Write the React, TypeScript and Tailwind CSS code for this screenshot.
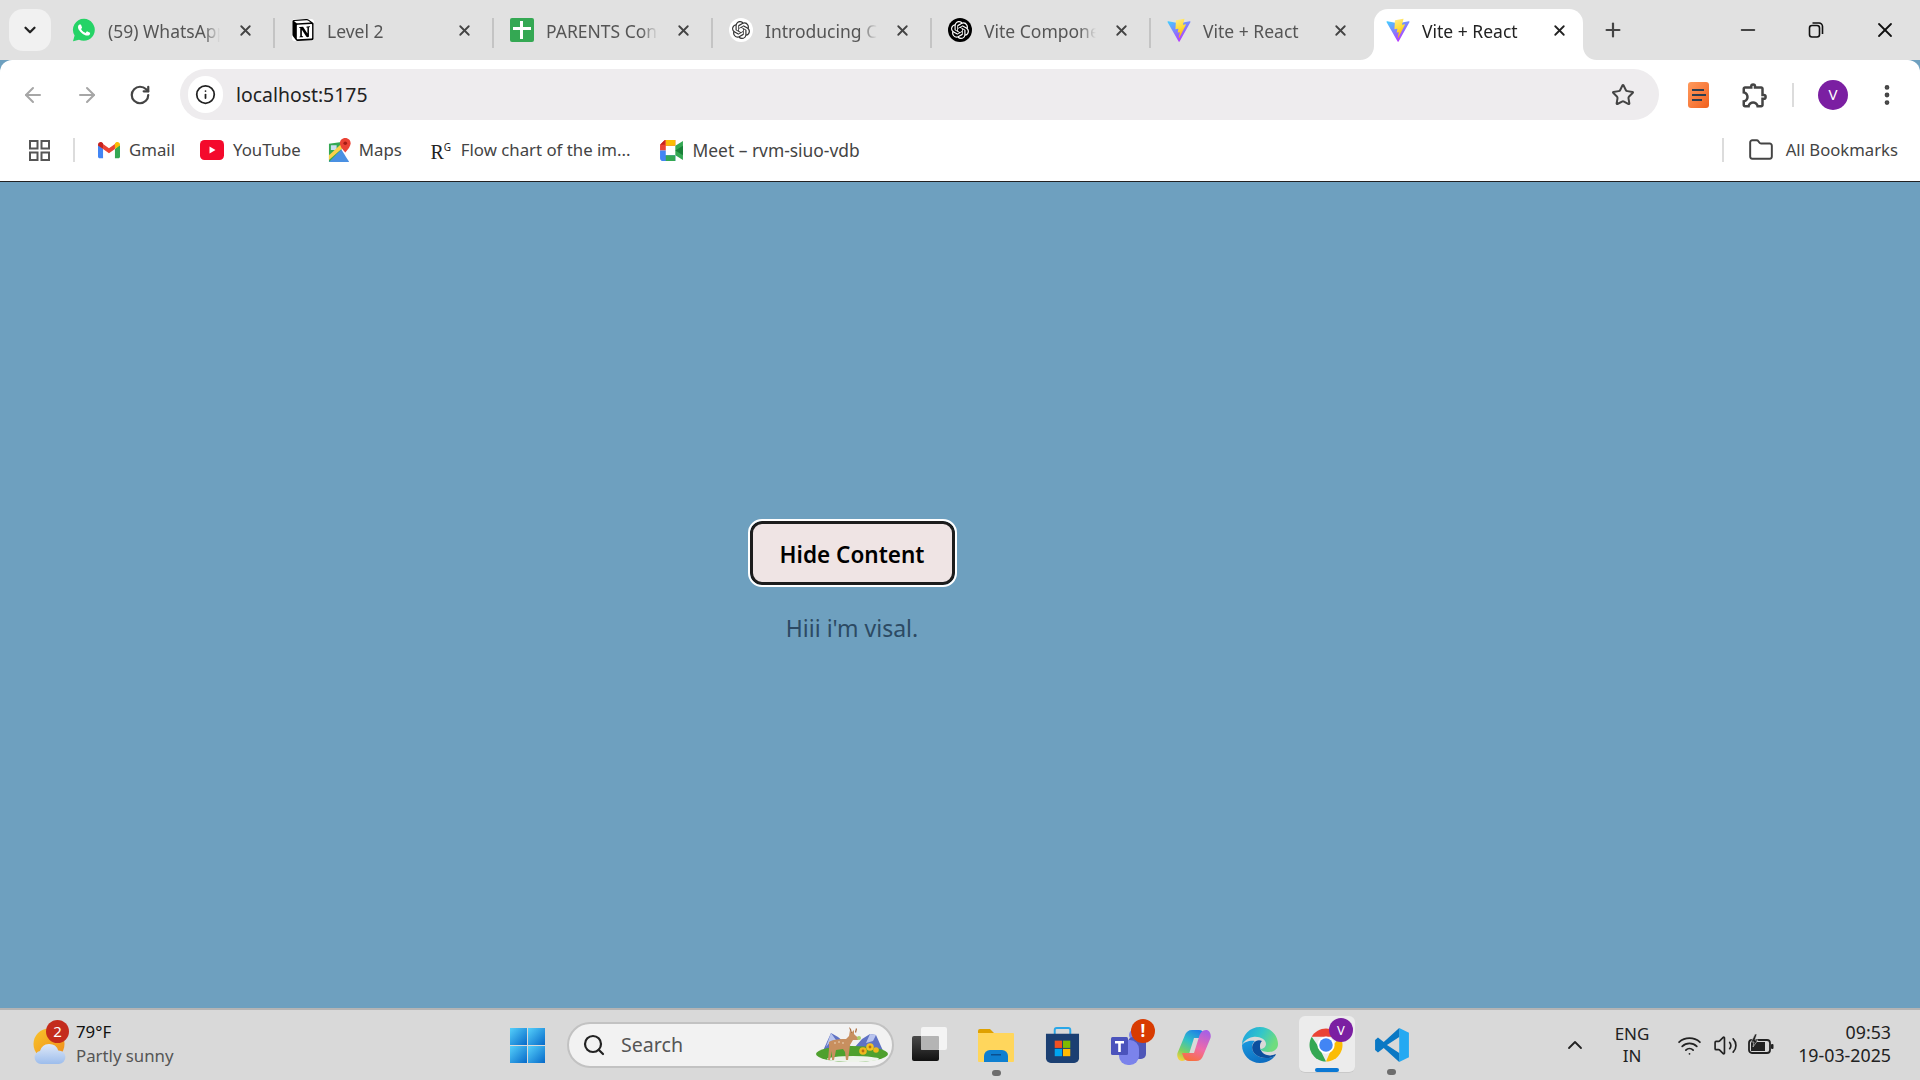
import React from "react";
import { ArrowLeft, ArrowRight, RotateCw, Info, Star, MoreVertical, Folder, Search, ChevronUp, ChevronDown, X, Plus, Minus, Wifi, Volume2 } from "lucide-react";
import { SiOpenai, SiNotion } from "react-icons/si";
import { MdOutlineExtension } from "react-icons/md";

const FONT = "font-['Noto_Sans','Open_Sans',sans-serif]";

function ViteLogo({ id }: { id: string }) {
  return (
    <svg viewBox="0 0 410 404" className="w-[25px] h-[25px]">
      <defs>
        <linearGradient id={id + "a"} x1="0" y1="0" x2="0.6" y2="1">
          <stop offset="0" stopColor="#41D1FF" />
          <stop offset="1" stopColor="#BD34FE" />
        </linearGradient>
        <linearGradient id={id + "b"} x1="0.3" y1="0" x2="0.6" y2="1">
          <stop offset="0" stopColor="#FFEA83" />
          <stop offset="0.5" stopColor="#FFDD35" />
          <stop offset="1" stopColor="#FFA800" />
        </linearGradient>
      </defs>
      <path fill={`url(#${id}a)`} d="M399.641 59.5246L215.643 388.545C211.844 395.338 202.084 395.378 198.228 388.618L10.5817 59.5563C6.38087 52.1896 12.6802 43.2665 21.0281 44.7586L205.223 77.6824C206.398 77.8924 207.601 77.8904 208.776 77.6763L389.119 44.8058C397.439 43.2894 403.768 52.1434 399.641 59.5246Z" />
      <path fill={`url(#${id}b)`} d="M292.965 1.5744L156.801 28.2552C154.563 28.6937 152.906 30.5903 152.771 32.8664L144.395 174.33C144.198 177.662 147.258 180.248 150.51 179.498L188.42 170.749C191.967 169.931 195.172 173.055 194.443 176.622L183.18 231.775C182.422 235.487 185.907 238.661 189.532 237.56L212.947 230.446C216.577 229.344 220.065 232.527 219.297 236.242L201.398 322.875C200.278 328.294 207.486 331.249 210.492 326.603L212.5 323.5L323.454 102.072C325.312 98.3645 322.108 94.137 318.036 94.9228L279.014 102.454C275.347 103.161 272.227 99.746 273.262 96.1583L298.731 7.86689C299.767 4.27314 296.636 0.855181 292.965 1.5744Z" />
    </svg>
  );
}

function WhatsappIcon() {
  return (
    <svg viewBox="0 0 24 24" className="w-[24px] h-[24px]">
      <path d="M12.100 .8A11 11 0 0 0 2.600 17.500L1 23.300l6-1.600A11 11 0 1 0 12.100 .8z" fill="#25d366" />
      <path d="M17.472 14.382c-.297-.149-1.758-.867-2.03-.967-.273-.099-.471-.148-.67.15-.197.297-.767.966-.94 1.164-.173.199-.347.223-.644.075-.297-.15-1.255-.463-2.39-1.475-.883-.788-1.48-1.761-1.653-2.059-.173-.297-.018-.458.13-.606.134-.133.298-.347.446-.52.149-.174.198-.298.298-.497.099-.198.05-.371-.025-.52-.075-.149-.669-1.612-.916-2.207-.242-.579-.487-.5-.669-.51-.173-.008-.371-.01-.57-.01-.198 0-.52.074-.792.372-.272.297-1.04 1.016-1.04 2.479 0 1.462 1.065 2.875 1.213 3.074.149.198 2.096 3.2 5.077 4.487.709.306 1.262.489 1.694.625.712.227 1.36.195 1.871.118.571-.085 1.758-.719 2.006-1.413.248-.694.248-1.289.173-1.413-.074-.124-.272-.198-.57-.347z" fill="#fff" />
    </svg>
  );
}

function SheetsIcon() {
  return (
    <svg viewBox="0 0 24 24" className="w-[24px] h-[24px]">
      <rect x="0" y="0" width="24" height="24" rx="2" fill="#34a853" />
      <rect x="3" y="9" width="18" height="3" fill="#fff" />
      <rect x="10" y="3" width="3" height="18" fill="#fff" />
    </svg>
  );
}

function Tab({ icon, title, active, sep }: { icon: React.ReactNode; title: string; active?: boolean; sep?: boolean }) {
  return (
    <div className="relative w-[219px] h-[60px] shrink-0">
      {active && (
        <>
          <div className="absolute left-[6px] top-[9px] bottom-0 w-[209px] bg-white rounded-t-[14px]" />
          <svg viewBox="0 0 14 14" className="absolute left-[-8px] bottom-0 w-[14px] h-[14px]"><path d="M14 0V14H0C8 14 14 8 14 0Z" fill="#fff" /></svg>
          <svg viewBox="0 0 14 14" className="absolute left-[215px] bottom-0 w-[14px] h-[14px]"><path d="M0 0V14H14C6 14 0 8 0 0Z" fill="#fff" /></svg>
        </>
      )}
      <div className="relative flex items-center h-[42px] mt-[9px] pl-[18px]">
        <div className="w-[24px] h-[24px] flex items-center justify-center shrink-0">{icon}</div>
        <div className={`ml-[12px] mt-[2px] w-[112px] whitespace-nowrap overflow-hidden text-[17.5px] leading-[24px] [mask-image:linear-gradient(90deg,#000_85%,transparent)] ${active ? "text-[#222]" : "text-[#555]"}`}>{title}</div>
        <X className={`ml-[17px] shrink-0 ${active ? "text-[#222]" : "text-[#444]"}`} size={17} strokeWidth={2.6} />
      </div>
      {sep && <div className="absolute right-[-2px] top-[18px] w-[2px] h-[30px] bg-[#c4c4c4]" />}
    </div>
  );
}

function GmailIcon() {
  return (
    <svg viewBox="0 0 24 18" className="w-[22px] h-[18px]">
      <path d="M0 3v13c0 1 .8 2 2 2h3.5V8z" fill="#4285f4" />
      <path d="M24 3v13c0 1-.8 2-2 2h-3.5V8z" fill="#34a853" />
      <path d="M5.5 8 12 12.6 18.5 8V2.4L12 7.2 5.5 2.4z" fill="#ea4335" />
      <path d="M0 3c0-2.4 2.7-3.6 4.5-2.3l1 .8V8L0 4z" fill="#c5221f" />
      <path d="M24 3c0-2.4-2.7-3.6-4.5-2.3l-1 .8V8L24 4z" fill="#fbbc04" />
    </svg>
  );
}

function YoutubeIcon() {
  return (
    <svg viewBox="0 0 24 20" className="w-[24px] h-[20px]">
      <rect width="24" height="20" rx="4.5" fill="#f40a2c" />
      <path d="M9.5 6.5v7l6-3.5z" fill="#fff" />
    </svg>
  );
}

function MapsIcon() {
  return (
    <svg viewBox="0 0 24 26" className="w-[23px] h-[25px]">
      <path d="M1 6 14 4v20L1 25z" fill="#34a853" />
      <path d="M1 25 14 12l8 13z" fill="#4a90e2" />
      <path d="M3 7.500h6v5H3z" fill="#c9dff0" />
      <path d="M1 18 14 6h1.500v4L1 23z" fill="#fbd04a" />
      <path d="M14 24 8 18l4-3.500 10 10z" fill="#4a90e2" />
      <path d="M18 0c-3.3 0-5.6 2.4-5.6 5.4C12.4 9.5 18 15 18 15s5.600-5.500 5.600-9.600C23.600 2.400 21.300 0 18 0z" fill="#ea4335" />
      <circle cx="18" cy="5.400" r="1.900" fill="#a51c15" />
    </svg>
  );
}

function MeetIcon() {
  return (
    <svg viewBox="0 0 24 22" className="w-[23px] h-[21px]">
      <path d="M5 0h11v6H6v5H0V5z" fill="#ea4335" />
      <path d="M0 11h6v5h10v6H3c-1.700 0-3-1.300-3-3z" fill="#4285f4" />
      <path d="M6 0h10v6H6z" fill="#fbbc04" />
      <path d="M6 16h10v6H6z" fill="#34a853" />
      <path d="M16 6v10l8 5V1z" fill="#34a853" />
      <path d="M16 11l8-5v10z" fill="#188038" />
      <path d="M0 5h5V0z" fill="#c5221f" />
    </svg>
  );
}

function Bookmark({ icon, label, iconW, gap, mr, size }: { icon: React.ReactNode; label: string; iconW: string; gap: string; mr: string; size: string }) {
  return (
    <div className={`flex items-center shrink-0 ${mr}`}>
      <div className={`flex items-center justify-center ${iconW} ${gap}`}>{icon}</div>
      <span className={`${size} leading-[24px] text-[#444] whitespace-nowrap`}>{label}</span>
    </div>
  );
}

function Slot({ children, tile }: { children: React.ReactNode; tile?: boolean }) {
  return (
    <div className="relative w-[66px] h-[70px] flex items-center justify-center shrink-0">
      {tile && <div className="absolute left-[6px] top-[6px] w-[56px] h-[57px] rounded-[6px] bg-[#ececec] border-b border-[#c9c9c9]" />}
      <div className="relative">{children}</div>
    </div>
  );
}

function Deer() {
  return (
    <svg viewBox="0 0 72 36" className="w-[72px] h-[36px]">
      <path d="M6 26 15 6l7 4 6 5 10 6 8-9 8-5 6 1 8 18z" fill="#5f72c4" />
      <path d="M10 20 15 6l5 7-5 1zM50 16l4-9 6 1-3 6z" fill="#b9c4ee" />
      <ellipse cx="36" cy="27" rx="36" ry="8" fill="#4fa02e" />
      <ellipse cx="37" cy="32" rx="26" ry="3" fill="#eef3ea" />
      <path d="M13 15c5-3 12-3 17-3l3-3 1-6 1 3 3-3 0 4 2 2 3 2-1 2-5 0-3 5-1 8-1 7h-2l-1-8-2-3-7 1-2 10h-2l0-9-2 9h-2l1-11z" fill="#c88f5f" />
      <path d="M35 6l-2-6 2 2 1 4zM39 5l1-4 1 1-1 4z" fill="#a9683a" />
      <circle cx="19" cy="16" r=".8" fill="#f2dcc4" />
      <circle cx="23" cy="15" r=".8" fill="#f2dcc4" />
      <circle cx="27" cy="16" r=".8" fill="#f2dcc4" />
      <circle cx="43" cy="11" r="2" fill="#a8cf6a" />
      <circle cx="47" cy="24" r="3.800" fill="#efb71d" />
      <circle cx="47" cy="24" r="1.400" fill="#b86f10" />
      <circle cx="54" cy="20" r="3.800" fill="#f4c224" />
      <circle cx="54" cy="20" r="1.400" fill="#b86f10" />
      <circle cx="60" cy="23" r="2.800" fill="#efb71d" />
    </svg>
  );
}

export default function App() {
  const inactive = [
    { t: "(59) WhatsApp", i: <WhatsappIcon /> },
    { t: "Level 2", i: <div className="w-[22px] h-[22px] bg-white flex items-center justify-center rounded-[3px]"><SiNotion size={22} color="#000" /></div> },
    { t: "PARENTS Contact", i: <SheetsIcon /> },
    { t: "Introducing ChatGPT", i: <div className="w-[24px] h-[24px] rounded-full bg-white flex items-center justify-center"><SiOpenai size={18} color="#333" /></div> },
    { t: "Vite Components", i: <div className="w-[24px] h-[24px] rounded-full bg-black flex items-center justify-center"><SiOpenai size={18} color="#fff" /></div> },
    { t: "Vite + React", i: <ViteLogo id="v1" /> },
  ];
  return (
    <div className={`${FONT} w-full h-screen flex flex-col overflow-hidden bg-[#6ea0bf]`}>
      <svg className="absolute w-0 h-0">
        <defs>
          <linearGradient id="edgeg" x1="0" y1="0" x2="1" y2="0.4">
            <stop offset="0" stopColor="#1b9de2" />
            <stop offset="0.55" stopColor="#33c6c9" />
            <stop offset="1" stopColor="#6fdc7e" />
          </linearGradient>
          <linearGradient id="edgeb" x1="0" y1="0" x2="0.6" y2="1">
            <stop offset="0" stopColor="#1a9be0" />
            <stop offset="1" stopColor="#0d6cc0" />
          </linearGradient>
          <linearGradient id="wing" x1="0" y1="0" x2="1" y2="1">
            <stop offset="0" stopColor="#55d0fb" />
            <stop offset="1" stopColor="#0669c9" />
          </linearGradient>
          <linearGradient id="cop1" x1="0.7" y1="0" x2="0.2" y2="1">
            <stop offset="0" stopColor="#1f7fe6" />
            <stop offset="0.4" stopColor="#2fc0c8" />
            <stop offset="0.75" stopColor="#7fd060" />
            <stop offset="1" stopColor="#f4d23c" />
          </linearGradient>
          <linearGradient id="cop2" x1="0.7" y1="0" x2="0.3" y2="1">
            <stop offset="0" stopColor="#a860e4" />
            <stop offset="0.55" stopColor="#f06aa8" />
            <stop offset="1" stopColor="#f8703c" />
          </linearGradient>
          <linearGradient id="sun" x1="0" y1="0" x2="1" y2="1">
            <stop offset="0" stopColor="#f9c42a" />
            <stop offset="1" stopColor="#ee8a1c" />
          </linearGradient>
          <linearGradient id="cloud" x1="0" y1="0" x2="0" y2="1">
            <stop offset="0" stopColor="#dfe9f8" />
            <stop offset="1" stopColor="#9dbdec" />
          </linearGradient>
          <linearGradient id="dark" x1="0" y1="0" x2="0" y2="1">
            <stop offset="0" stopColor="#4a4a4a" />
            <stop offset="1" stopColor="#111" />
          </linearGradient>
        </defs>
      </svg>

      {/* tab strip */}
      <div className="h-[60px] shrink-0 bg-[#e1e1e1] flex items-start">
        <div className="w-[54px] shrink-0 pl-[9px] pt-[9px]">
          <div className="w-[42px] h-[42px] rounded-[14px] bg-[#f1f1f1] flex items-center justify-center">
            <ChevronDown size={18} strokeWidth={3} className="text-[#222]" />
          </div>
        </div>
        {inactive.map((t, i) => (
          <Tab key={t.t} icon={t.i} title={t.t} sep={i !== 5} />
        ))}
        <Tab icon={<ViteLogo id="v2" />} title="Vite + React" active />
        <div className="w-[22px] ml-[15px] h-[60px] flex items-center justify-center shrink-0">
          <Plus size={22} strokeWidth={2.4} className="text-[#444]" />
        </div>
        <div className="ml-auto flex items-center h-[60px] pr-[23px] gap-[49px] text-[#111]">
          <Minus size={22} strokeWidth={1.8} />
          <svg viewBox="0 0 16 16" className="w-[16px] h-[16px]" fill="none" stroke="#111" strokeWidth="1.600">
            <rect x="1.500" y="3.500" width="10" height="11.500" rx="2.500" />
            <path d="M4.500 1h6.500A3.500 3.500 0 0 1 14.500 4.500V12" />
          </svg>
          <X size={24} strokeWidth={1.8} />
        </div>
      </div>

      {/* toolbar */}
      <div className="h-[60px] shrink-0 bg-white rounded-t-[12px] flex items-start pt-[9px]">
        <div className="w-[180px] shrink-0 h-[51px] flex items-center pl-[21px] gap-[30px]">
          <ArrowLeft size={24} strokeWidth={2} className="text-[#a6a6a6]" />
          <ArrowRight size={24} strokeWidth={2} className="text-[#a6a6a6]" />
          <RotateCw size={22} strokeWidth={2.4} className="text-[#444]" />
        </div>
        <div className="w-[1479px] shrink-0 h-[51px] rounded-full bg-[#eeecee] flex items-center pl-[8px] pr-[24px]">
          <div className="w-[35px] h-[37px] rounded-full bg-white flex items-center justify-center">
            <Info size={21} strokeWidth={2} className="text-[#222]" />
          </div>
          <span className="ml-[13px] text-[19.4px] leading-[26px] text-[#222]">localhost:5175</span>
          <Star size={24} strokeWidth={2} className="ml-auto text-[#444]" />
        </div>
        <div className="flex-1 h-[51px] flex items-center pl-[29px]">
          <div className="shrink-0 w-[21px] h-[26px] rounded-[3px] bg-gradient-to-br from-[#ff9a5c] to-[#f0601a] flex flex-col justify-center gap-[3px] px-[4px]">
            <div className="h-[2px] w-[12px] bg-[#2c3e50]" />
            <div className="h-[2px] w-[14px] bg-[#2c3e50]" />
            <div className="h-[2px] w-[10px] bg-[#2c3e50]" />
          </div>
          <MdOutlineExtension size={30} className="shrink-0 ml-[31px] text-[#444]" />
          <div className="shrink-0 ml-[22px] w-[2px] h-[24px] bg-[#dcdcdc]" />
          <div className="shrink-0 ml-[24px] w-[30px] h-[30px] rounded-full bg-[#7b1fa2] flex items-center justify-center text-white text-[15px]">V</div>
          <MoreVertical size={26} strokeWidth={2.4} className="shrink-0 ml-[26px] text-[#444]" />
        </div>
      </div>

      {/* bookmarks */}
      <div className="h-[61px] shrink-0 bg-white flex items-center pl-[29px] pr-[22px] pb-[1px]">
        <svg viewBox="0 0 21 21" className="w-[21px] h-[21px] shrink-0" fill="none" stroke="#555" strokeWidth="2">
          <rect x="1" y="1" width="7.500" height="7.500" />
          <rect x="12.500" y="1" width="7.500" height="7.500" />
          <rect x="1" y="12.500" width="7.500" height="7.500" />
          <rect x="12.500" y="12.500" width="7.500" height="7.500" />
        </svg>
        <div className="ml-[23px] mr-[23px] w-[2px] h-[24px] bg-[#dcdcdc] shrink-0" />
        <Bookmark size="text-[16.8px]" icon={<GmailIcon />} label="Gmail" iconW="w-[22px]" gap="mr-[9px]" mr="mr-[25px]" />
        <Bookmark size="text-[16.8px]" icon={<YoutubeIcon />} label="YouTube" iconW="w-[24px]" gap="mr-[9px]" mr="mr-[27px]" />
        <Bookmark size="text-[16.8px]" icon={<MapsIcon />} label="Maps" iconW="w-[23px]" gap="mr-[8px]" mr="mr-[29px]" />
        <Bookmark size="text-[16.8px]" icon={<span className="font-['Liberation_Serif',serif] text-[#222] text-[20px] leading-[24px] mt-[4px] whitespace-nowrap">R<sup className="text-[10px] font-['Noto_Sans',sans-serif] top-[-0.8em]">G</sup></span>} label="Flow chart of the im..." iconW="w-[20px]" gap="mr-[10px]" mr="mr-[29px]" />
        <Bookmark size="text-[17.4px]" icon={<MeetIcon />} label="Meet – rvm-siuo-vdb" iconW="w-[23px]" gap="mr-[10px]" mr="mr-0" />
        <div className="ml-auto w-[2px] h-[24px] bg-[#dcdcdc] shrink-0" />
        <Folder size={26} strokeWidth={1.8} className="ml-[24px] text-[#444] shrink-0" />
        <span className="ml-[12px] text-[16.7px] leading-[24px] text-[#444] whitespace-nowrap">All Bookmarks</span>
      </div>

      {/* page */}
      <div className="flex-1 min-h-0 border-t border-[#222] bg-[#6ea0bf] flex flex-col items-center pr-[216px] pt-[339px]">
        <button className="w-[205px] h-[64px] pt-[3px] rounded-[12px] bg-[#efe4e4] border-[3px] border-[#1c1c1c] outline-2 outline-white text-[22.5px] font-semibold text-black flex items-center justify-center">
          Hide Content
        </button>
        <p className="mt-[27px] text-[23px] leading-[32px] text-[#2c4a63]">Hiii i'm visal.</p>
      </div>

      {/* taskbar */}
      <div className="h-[72px] shrink-0 border-t-2 border-[#b4b4b4] bg-[#d9d9d9] flex items-center">
        <div className="w-[494px] shrink-0 flex items-center pl-[32px]">
          <div className="relative w-[34px] h-[46px] shrink-0">
            <svg viewBox="0 0 34 46" className="w-[34px] h-[46px]">
              <circle cx="17" cy="22" r="15.500" fill="url(#sun)" />
              <path d="M9 42a6.500 6.500 0 0 1-1-12.900 9.500 9.500 0 0 1 18.200-.7A6.800 6.800 0 0 1 27 42z" fill="url(#cloud)" />
            </svg>
            <div className="absolute left-[14px] top-[-2px] w-[23px] h-[23px] rounded-full bg-[#c42b1c] text-white text-[15px] leading-[23px] text-center">2</div>
          </div>
          <div className="ml-[10px] -mt-[2px] flex flex-col">
            <span className="text-[16.8px] leading-[24px] text-[#111]">79°F</span>
            <span className="text-[16.8px] leading-[24px] text-[#555]">Partly sunny</span>
          </div>
        </div>
        <div className="w-[66px] shrink-0 flex justify-center">
          <svg viewBox="0 0 35 35" className="w-[35px] h-[35px]">
            <rect x="0" y="0" width="17" height="17" fill="url(#wing)" />
            <rect x="18" y="0" width="17" height="17" fill="url(#wing)" />
            <rect x="0" y="18" width="17" height="17" fill="url(#wing)" />
            <rect x="18" y="18" width="17" height="17" fill="url(#wing)" />
          </svg>
        </div>
        <div className="ml-[7px] w-[327px] h-[46px] shrink-0 rounded-full bg-[#f2f2f2] border-2 border-[#c2c2c2] flex items-center pl-[13px] relative">
          <Search size={24} strokeWidth={2.2} className="text-[#222]" />
          <span className="ml-[15px] text-[19.6px] text-[#555]">Search</span>
          <div className="absolute right-[4px] top-[3px]"><Deer /></div>
        </div>
        <div className="ml-[3px] flex shrink-0">
          <Slot>
            <svg viewBox="0 0 36 36" className="w-[36px] h-[36px]">
              <rect x="0" y="9" width="27" height="25" rx="2" fill="url(#dark)" />
              <rect x="9" y="0" width="26" height="23" rx="2" fill="#f4f4f4" />
              <rect x="9" y="9" width="18" height="14" rx="1" fill="#b4b4b4" />
            </svg>
          </Slot>
          <Slot>
            <svg viewBox="0 0 36 34" className="w-[36px] h-[34px]">
              <path d="M0 3a2 2 0 0 1 2-2h10l4 4H0z" fill="#dfa100" />
              <rect x="0" y="5" width="36" height="29" rx="1" fill="#ffd65c" />
              <path d="M6 34v-6a6 6 0 0 1 6-6h12a6 6 0 0 1 6 6v6z" fill="#0f7fd0" />
              <rect x="13" y="26" width="10" height="1.500" fill="#0a4f90" />
            </svg>
            <div className="absolute left-[14px] top-[42px] w-[9px] h-[6px] rounded-full bg-[#6d6d6d]" />
          </Slot>
          <Slot>
            <svg viewBox="0 0 36 38" className="w-[35px] h-[37px]">
              <path d="M10 8V3a2 2 0 0 1 2-2h12a2 2 0 0 1 2 2v5" fill="none" stroke="#2aa7e8" strokeWidth="2" />
              <path d="M1 7h34v25a5 5 0 0 1-5 5H6a5 5 0 0 1-5-5z" fill="#1b3f72" />
              <rect x="10" y="14" width="7.500" height="7.500" fill="#f25022" />
              <rect x="18.500" y="14" width="7.500" height="7.500" fill="#7fba00" />
              <rect x="10" y="22.500" width="7.500" height="7.500" fill="#00a4ef" />
              <rect x="18.500" y="22.500" width="7.500" height="7.500" fill="#ffb900" />
            </svg>
          </Slot>
          <Slot>
            <div className="relative w-[36px] h-[36px]">
              <svg viewBox="0 0 36 38" className="w-[36px] h-[38px]">
                <circle cx="25" cy="8" r="6" fill="#7b83eb" />
                <rect x="18" y="10" width="18" height="22" rx="5" fill="#4f57b8" />
                <rect x="9" y="13" width="20" height="25" rx="9" fill="#7b83eb" />
                <rect x="1" y="10" width="17" height="18" rx="1.500" fill="#4b53bc" />
                <path d="M5 14h9v2.400h-3.200V25H8.200v-8.600H5z" fill="#fff" />
              </svg>
              <div className="absolute left-[21px] top-[-8px] w-[24px] h-[24px] rounded-full bg-[#d83b01] text-white text-[17px] font-bold leading-[24px] text-center">!</div>
            </div>
          </Slot>
          <Slot>
            <svg viewBox="0 0 34 31" className="w-[34px] h-[31px]">
              <path d="M8 5C9 2 11.500 0 15 0H22C25 0 27 2 28 5L29 8H17L12 24C11 28 8.500 31 5 31 1.500 31 -0.500 27 .5 23Z" fill="url(#cop1)" />
              <path d="M26 26C25 29 22.500 31 19 31H12C9 31 7 29 6 26L5 23H17L22 7C23 3 25.500 0 29 0 32.500 0 34.500 4 33.500 8Z" fill="url(#cop2)" />
            </svg>
          </Slot>
          <Slot>
            <svg viewBox="0 0 36 36" className="w-[36px] h-[36px]">
              <path d="M0 18C0 28 8 36 18 36c6 0 11-2 15-7-6 3-15 3-20-2-4-4-4-10 0-13C8 13 2 15 0 18z" fill="url(#edgeb)" />
              <path d="M14 14c-5 3-5 9-1 13 5 5 14 5 20 2l1-2c-3 1-6 2-9 1-7-2-9-10-5-14-2-1-4-1-6 0z" fill="#0b4f9e" />
              <path d="M18 0C28 0 36 8 36 17c0 5-4 8-9 8-4 0-8-1-9-3 3 0 6-2 6-5 0-5-7-8-13-7C4 11 1 16 0 18 0 8 8 0 18 0z" fill="url(#edgeg)" />
            </svg>
          </Slot>
          <Slot tile>
            <div className="relative w-[36px] h-[36px]">
              <svg viewBox="0 0 48 48" className="w-[36px] h-[36px]">
                <path d="M4.950 13A22 22 0 0 1 43.050 13L24 13z" fill="#ea4335" />
                <path d="M43.050 13A22 22 0 0 1 24 46l9.500-22z" fill="#fbbc04" />
                <path d="M24 46A22 22 0 0 1 4.950 13L14.500 27z" fill="#34a853" />
                <circle cx="24" cy="24" r="11.500" fill="#fff" />
                <circle cx="24" cy="24" r="9" fill="#4285f4" />
              </svg>
              <div className="absolute left-[21px] top-[-9px] w-[24px] h-[24px] rounded-full bg-[#7b1fa2] text-white text-[13px] leading-[24px] text-center">V</div>
            </div>
            <div className="absolute left-[7px] top-[41px] w-[24px] h-[4px] rounded-full bg-[#0a78d4]" />
          </Slot>
          <Slot>
            <svg viewBox="0 0 100 100" className="w-[36px] h-[36px]">
              <path d="M70 3 97 16V84L70 97Z" fill="#23a9f2" />
              <path d="M70 3V28L36 50 70 72V97L27 58 11 71 3 64V36L11 29 27 42Z" fill="#0a78c4" />
            </svg>
            <div className="absolute left-[13px] top-[42px] w-[9px] h-[6px] rounded-full bg-[#6d6d6d]" />
          </Slot>
        </div>
        <div className="ml-auto flex items-center shrink-0">
          <div className="w-[30px] flex justify-center"><ChevronUp size={24} strokeWidth={1.8} className="text-[#222]" /></div>
          <div className="ml-[12px] w-[60px] text-center text-[17px] leading-[22px] text-[#222] flex flex-col">
            <span>ENG</span><span>IN</span>
          </div>
          <div className="ml-[9px] w-[36px] flex justify-center"><Wifi size={25} strokeWidth={1.7} className="text-[#222]" /></div>
          <div className="w-[36px] flex justify-center"><Volume2 size={25} strokeWidth={1.6} className="text-[#222]" /></div>
          <div className="w-[36px] flex justify-center">
            <svg viewBox="0 0 26 24" className="w-[26px] h-[24px]">
              <rect x="1" y="7" width="21" height="13" rx="3" fill="none" stroke="#222" strokeWidth="1.800" />
              <rect x="3" y="9" width="14" height="9" fill="#222" />
              <rect x="23" y="11" width="2.500" height="5" rx="1" fill="#222" />
              <path d="M7 1 3 9h3l-1 5 5-7H7l2-6z" fill="#222" stroke="#d9d9d9" strokeWidth="0.600" />
            </svg>
          </div>
          <div className="w-[141px] pr-[29px] -mt-[2px] flex flex-col items-end text-[17.8px] leading-[23px] text-[#222]">
            <span>09:53</span><span>19-03-2025</span>
          </div>
        </div>
      </div>
    </div>
  );
}
